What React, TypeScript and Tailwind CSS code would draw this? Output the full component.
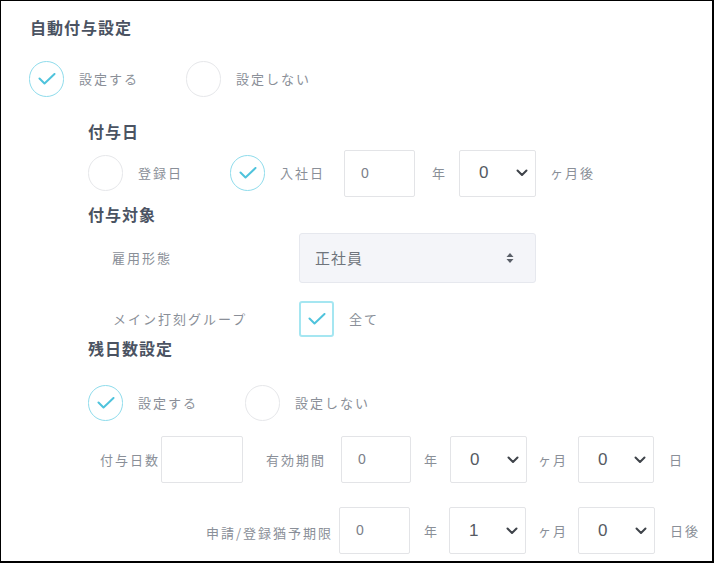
import React from "react";

const font = { fontFamily: '"Noto Sans CJK JP", "Liberation Sans", sans-serif' };

const Check = () => (
  <svg width="18" height="12" viewBox="0 0 18 12" fill="none">
    <polyline points="1.5,5.5 6.5,10.5 16.5,1" stroke="#4fc3dc" strokeWidth="2" strokeLinecap="round" strokeLinejoin="round" />
  </svg>
);

const Radio = ({ checked, label, width }: { checked?: boolean; label: string; width: string }) => (
  <div className={`flex items-center ${width}`}>
    <div
      className={`w-[35px] h-[36px] rounded-full border-[1.5px] flex items-center justify-center shrink-0 ${
        checked ? "border-[#8fdcec]" : "border-[#e6e7ea]"
      }`}
    >
      {checked && <Check />}
    </div>
    <span className="ml-[15px] text-[13px] tracking-[2px] text-[#8a8f98]">{label}</span>
  </div>
);

const Input = ({ value, width }: { value?: string; width: string }) => (
  <div className={`${width} h-[47px] border border-[#e3e4e7] rounded-[2px] flex items-center pl-[16px] text-[14px] text-[#7b8089]`} style={{ fontFamily: '"Liberation Sans", sans-serif' }}>
    {value}
  </div>
);

const Select = ({ value, width }: { value: string; width: string }) => (
  <div className={`${width} h-[47px] border border-[#e3e4e7] rounded-[2px] flex items-center justify-between pl-[19px] pr-[7px] text-[17px] text-[#555a63]`} style={{ fontFamily: '"Liberation Sans", sans-serif' }}>
    <span>{value}</span>
    <svg width="12" height="8" viewBox="0 0 12 8" fill="none">
      <polyline points="1.5,1.5 6,6 10.5,1.5" stroke="#3f434a" strokeWidth="2" strokeLinecap="round" strokeLinejoin="round" />
    </svg>
  </div>
);

const Label = ({ children, className = "" }: { children: React.ReactNode; className?: string }) => (
  <span className={`text-[13px] tracking-[2px] text-[#8a8f98] ${className}`}>{children}</span>
);

const Heading = ({ children, className = "" }: { children: React.ReactNode; className?: string }) => (
  <div className={`h-[20px] flex items-center text-[16px] font-bold tracking-[1px] text-[#4b5362] ${className}`}>{children}</div>
);

export default function App() {
  return (
    <div className="w-[714px] h-[563px] bg-white border-l border-t border-r-2 border-b-2 border-black overflow-hidden pl-[28px] pt-[16px]" style={font}>
      <Heading className="ml-[1px]">自動付与設定</Heading>

      <div className="flex mt-[24px]">
        <Radio checked label="設定する" width="w-[157px]" />
        <Radio label="設定しない" width="w-[160px]" />
      </div>

      <div className="ml-[59px]">
        <Heading className="mt-[24px]">付与日</Heading>

        <div className="flex items-center h-[46px] mt-[9px]">
          <Radio label="登録日" width="w-[142px]" />
          <Radio checked label="入社日" width="w-[114px]" />
          <Input value="0" width="w-[71px]" />
          <Label className="ml-[17px]">年</Label>
          <div className="ml-[12px]"><Select value="0" width="w-[77px]" /></div>
          <Label className="ml-[14px]">ヶ月後</Label>
        </div>

        <Heading className="mt-[8px]">付与対象</Heading>

        <div className="flex items-center mt-[9px]">
          <Label className="ml-[24px] w-[187px]">雇用形態</Label>
          <div className="w-[237px] h-[50px] bg-[#f4f5f9] border border-[#e6e8ee] rounded-[3px] flex items-center justify-between pl-[15px] pr-[21px]">
            <span className="text-[15px] tracking-[1px] text-[#6f747c]">正社員</span>
            <svg width="8" height="12" viewBox="0 0 8 12">
              <polygon points="4,1 7.5,5 0.5,5" fill="#5a5f68" />
              <polygon points="0.5,7 7.5,7 4,11" fill="#5a5f68" />
            </svg>
          </div>
        </div>

        <div className="flex items-center mt-[18px]">
          <Label className="ml-[25px] w-[186px]">メイン打刻グループ</Label>
          <div className="w-[35px] h-[36px] border-2 border-[#a5e6f1] rounded-[3px] flex items-center justify-center">
            <Check />
          </div>
          <Label className="ml-[15px]">全て</Label>
        </div>

        <Heading className="mt-[1px]">残日数設定</Heading>

        <div className="flex mt-[27px]">
          <Radio checked label="設定する" width="w-[157px]" />
          <Radio label="設定しない" width="w-[160px]" />
        </div>

        <div className="flex items-center mt-[15px]">
          <Label className="ml-[12px] w-[61px]">付与日数</Label>
          <Input width="w-[82px]" />
          <Label className="ml-[23px] w-[75px]">有効期間</Label>
          <Input value="0" width="w-[70px]" />
          <Label className="ml-[13px]">年</Label>
          <div className="ml-[11px]"><Select value="0" width="w-[77px]" /></div>
          <Label className="ml-[11px]">ヶ月</Label>
          <div className="ml-[10px]"><Select value="0" width="w-[76px]" /></div>
          <Label className="ml-[15px]">日</Label>
        </div>

        <div className="flex items-center mt-[24px]">
          <div className="w-[251px] text-right pr-[6px]">
            <Label>申請/登録猶予期限</Label>
          </div>
          <Input value="0" width="w-[71px]" />
          <Label className="ml-[14px]">年</Label>
          <div className="ml-[10px]"><Select value="1" width="w-[77px]" /></div>
          <Label className="ml-[12px]">ヶ月</Label>
          <div className="ml-[10px]"><Select value="0" width="w-[77px]" /></div>
          <Label className="ml-[15px]">日後</Label>
        </div>
      </div>
    </div>
  );
}
